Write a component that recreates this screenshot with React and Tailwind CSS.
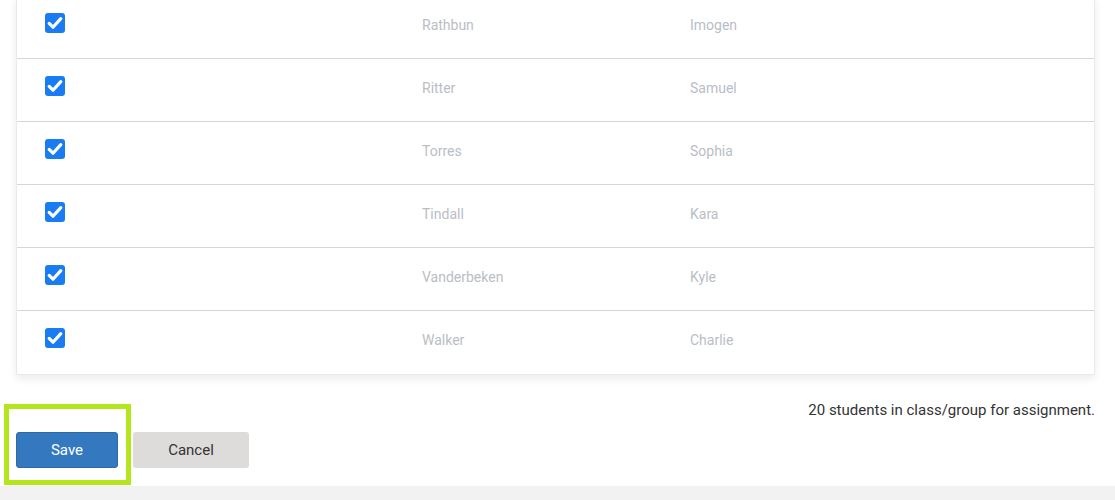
import React from 'react';

const students = [
  { last: 'Rathbun', first: 'Imogen' },
  { last: 'Ritter', first: 'Samuel' },
  { last: 'Torres', first: 'Sophia' },
  { last: 'Tindall', first: 'Kara' },
  { last: 'Vanderbeken', first: 'Kyle' },
  { last: 'Walker', first: 'Charlie' },
];

const Checkbox = () => (
  <div className="w-5 h-5 rounded-[3px] bg-[#1a7cf3] flex items-center justify-center">
    <svg viewBox="0 0 20 20" className="w-5 h-5">
      <path d="M4.2 10.4l3.8 3.8 7.8-8.6" fill="none" stroke="white" strokeWidth="3.2" strokeLinecap="round" strokeLinejoin="round" />
    </svg>
  </div>
);

const App = () => {
  return (
    <div className="w-[1115px] h-[500px] overflow-hidden bg-white flex flex-col font-['Roboto',sans-serif] text-[#333]">
      <div className="flex-grow pl-4 pr-5">
        {/* Student table */}
        <div className="-mt-[5px] bg-white border border-[#e4ebf3] shadow-[0_4px_8px_rgba(0,0,0,0.08)]">
          {students.map((s, i) => (
            <div
              key={s.last}
              className={`h-[63px] flex items-start pt-[17px] pl-7 text-sm ${i < students.length - 1 ? 'border-b border-[#d6d6d6]' : ''}`}
            >
              <div className="w-[377px]">
                <Checkbox />
              </div>
              <div className="w-[268px] pt-[2px] text-[#b9bec6]">{s.last}</div>
              <div className="pt-[2px] text-[#b9bec6]">{s.first}</div>
            </div>
          ))}
        </div>

        <div className="mt-[25px] text-right text-[15px] leading-5">20 students in class/group for assignment.</div>

        {/* Actions */}
        <div className="relative mt-[12px] flex gap-[15px]">
          <div className="absolute -left-3 -top-[28px] w-[127px] h-[81px] border-[5px] border-[#b4e61e]" />
          <button className="w-[102px] h-9 rounded-[3px] bg-[#3479c0] border border-[#2d6aa8] text-white text-[15px]">
            Save
          </button>
          <button className="w-[116px] h-9 rounded-[3px] bg-[#dddcdb] text-[#333] text-[15px]">
            Cancel
          </button>
        </div>
      </div>
      <div className="h-[14px] bg-[#f2f2f2]" />
    </div>
  );
};

export default App;
